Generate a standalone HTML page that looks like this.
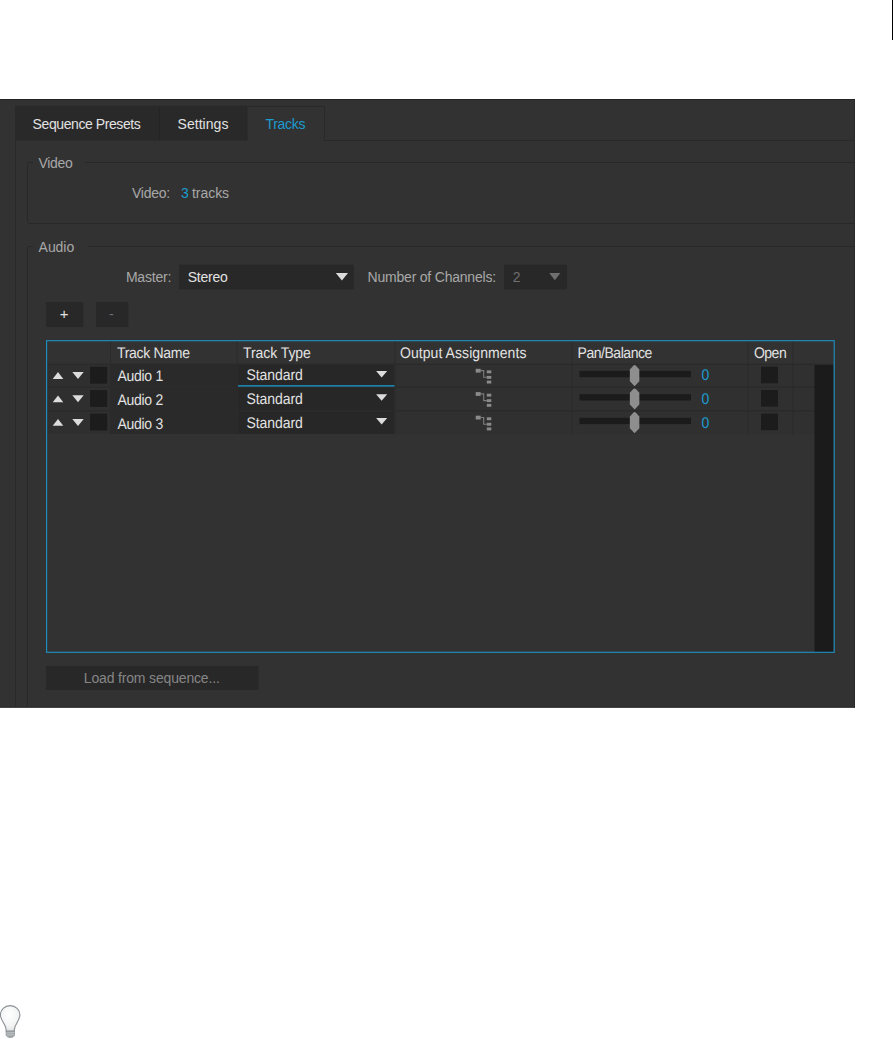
<!DOCTYPE html>
<html><head><meta charset="utf-8"><title>Tracks</title>
<style>
html,body{margin:0;padding:0;background:#fff}
body{width:893px;height:1039px;position:relative;overflow:hidden;font-family:"Liberation Sans",sans-serif}
svg{position:absolute;left:0;top:0;display:block}
span{position:absolute;display:block;white-space:pre}
.tt{text-rendering:geometricPrecision;transform-origin:0 12px;transform:scaleY(1.1)}
</style></head><body>
<svg width="893" height="1039" viewBox="0 0 893 1039">
<rect x="0" y="99" width="855" height="608.6" fill="#323232"/>
<rect x="0" y="99" width="855" height="1" fill="#232323"/>
<rect x="0" y="706.8" width="855" height="0.8" fill="#1f1f1f"/>
<rect x="854.2" y="99" width="0.8" height="608.6" fill="#2a2a2a"/>
<rect x="15" y="105.7" width="232" height="34.8" fill="#292929"/>
<rect x="159" y="106" width="1" height="34.5" fill="#242424"/>
<rect x="324" y="140" width="531" height="1" fill="#292929"/>
<rect x="246.5" y="106" width="78.5" height="1" fill="#292929"/>
<rect x="246.3" y="106" width="1.0" height="34.5" fill="#272727"/>
<rect x="324" y="106" width="1" height="35" fill="#292929"/>
<rect x="15" y="140.5" width="1" height="566.5" fill="#292929"/>
<path d="M855 162.5 H85 M33 162.5 H29.5 Q27.5 162.5 27.5 164.5 V221.5 Q27.5 223.5 29.5 223.5 H855" fill="none" stroke="#282828" stroke-width="1"/>
<path d="M855 246.5 H88.5 M33 246.5 H29.5 Q27.5 246.5 27.5 248.5 V707" fill="none" stroke="#282828" stroke-width="1"/>
<rect x="179" y="264.7" width="175" height="24.7" fill="#282828"/>
<path d="M335.8 272.9 L348 272.9 L341.9 280.5 Z" fill="#dcdcdc"/>
<rect x="504" y="264.7" width="63" height="24.7" fill="#282828"/>
<path d="M549.3 272.9 L560.4 272.9 L554.85 280.2 Z" fill="#707070"/>
<rect x="46" y="302" width="37.4" height="25" fill="#282828"/>
<rect x="96" y="302" width="32.4" height="25" fill="#282828"/>
<rect x="47" y="364.8" width="63" height="21.8" fill="#2f2f2f"/>
<rect x="111" y="364.8" width="126" height="21.8" fill="#2a2a2a"/>
<rect x="237.5" y="364.8" width="157.0" height="21.8" fill="#272727"/>
<rect x="395.5" y="364.8" width="419.5" height="21.8" fill="#303030"/>
<rect x="47" y="387.9" width="63" height="22.2" fill="#2f2f2f"/>
<rect x="111" y="387.9" width="126" height="22.2" fill="#2a2a2a"/>
<rect x="237.5" y="387.9" width="157.0" height="22.2" fill="#272727"/>
<rect x="395.5" y="387.9" width="419.5" height="22.2" fill="#303030"/>
<rect x="47" y="411.4" width="63" height="22.4" fill="#2f2f2f"/>
<rect x="111" y="411.4" width="126" height="22.4" fill="#2a2a2a"/>
<rect x="237.5" y="411.4" width="157.0" height="22.4" fill="#272727"/>
<rect x="395.5" y="411.4" width="419.5" height="22.4" fill="#303030"/>
<rect x="47" y="363.6" width="787" height="1.3" fill="#2b2b2b"/>
<rect x="47" y="386.6" width="768" height="1.4" fill="#2b2b2b"/>
<rect x="47" y="410.1" width="768" height="1.4" fill="#2b2b2b"/>
<rect x="110.0" y="341" width="1.0" height="93.5" fill="#2a2a2a"/>
<rect x="236.5" y="341" width="1.0" height="93.5" fill="#2a2a2a"/>
<rect x="394.5" y="341" width="1.0" height="93.5" fill="#2a2a2a"/>
<rect x="571.5" y="341" width="1.0" height="93.5" fill="#2a2a2a"/>
<rect x="747.5" y="341" width="1.0" height="93.5" fill="#2a2a2a"/>
<rect x="792.5" y="341" width="1.0" height="93.5" fill="#2a2a2a"/>
<rect x="814.5" y="365" width="19.0" height="287" fill="#1b1b1b"/>
<path d="M52.7 378.9 L63.3 378.9 L58.0 372.1 Z" fill="#dcdcdc"/>
<path d="M72.3 372.0 L83.7 372.0 L78.0 379.0 Z" fill="#dcdcdc"/>
<rect x="90" y="366.8" width="17.2" height="16.8" fill="#1c1c1c"/>
<path d="M376.1 371.0 L387.2 371.0 L381.65 377.5 Z" fill="#dcdcdc"/>
<rect x="475.7" y="368.8" width="5.0" height="3.8" fill="#8a8a8a"/>
<rect x="486.8" y="370.4" width="4.5" height="2.9" fill="#8a8a8a"/>
<rect x="486.8" y="375.9" width="4.5" height="2.9" fill="#8a8a8a"/>
<rect x="486.8" y="380.6" width="4.5" height="2.9" fill="#8a8a8a"/>
<path d="M480.7 370.6 H483.7 V377.3 H486.9" fill="none" stroke="#7c7c7c" stroke-width="1.1"/>
<rect x="579.5" y="370.9" width="111.5" height="6.3" fill="#1b1b1b"/>
<path d="M629.85 369.5 L633.3 365.8 Q634.6 364.4 635.9 365.8 L639.35 369.5 V381.3 L634.6 386.3 L629.85 381.3 Z" fill="#8e8e8e"/>
<rect x="761" y="366.7" width="17" height="16.6" fill="#1c1c1c"/>
<path d="M52.7 402.2 L63.3 402.2 L58.0 395.4 Z" fill="#dcdcdc"/>
<path d="M72.3 395.3 L83.7 395.3 L78.0 402.3 Z" fill="#dcdcdc"/>
<rect x="90" y="390.1" width="17.2" height="16.8" fill="#1c1c1c"/>
<path d="M376.1 394.3 L387.2 394.3 L381.65 400.8 Z" fill="#dcdcdc"/>
<rect x="475.7" y="392.1" width="5.0" height="3.8" fill="#8a8a8a"/>
<rect x="486.8" y="393.7" width="4.5" height="2.9" fill="#8a8a8a"/>
<rect x="486.8" y="399.2" width="4.5" height="2.9" fill="#8a8a8a"/>
<rect x="486.8" y="403.9" width="4.5" height="2.9" fill="#8a8a8a"/>
<path d="M480.7 393.9 H483.7 V400.6 H486.9" fill="none" stroke="#7c7c7c" stroke-width="1.1"/>
<rect x="579.5" y="394.2" width="111.5" height="6.3" fill="#1b1b1b"/>
<path d="M629.85 392.8 L633.3 389.1 Q634.6 387.7 635.9 389.1 L639.35 392.8 V404.6 L634.6 409.6 L629.85 404.6 Z" fill="#8e8e8e"/>
<rect x="761" y="390.0" width="17" height="16.6" fill="#1c1c1c"/>
<path d="M52.7 425.8 L63.3 425.8 L58.0 419.0 Z" fill="#dcdcdc"/>
<path d="M72.3 418.9 L83.7 418.9 L78.0 425.9 Z" fill="#dcdcdc"/>
<rect x="90" y="413.7" width="17.2" height="16.8" fill="#1c1c1c"/>
<path d="M376.1 417.9 L387.2 417.9 L381.65 424.4 Z" fill="#dcdcdc"/>
<rect x="475.7" y="415.7" width="5.0" height="3.8" fill="#8a8a8a"/>
<rect x="486.8" y="417.3" width="4.5" height="2.9" fill="#8a8a8a"/>
<rect x="486.8" y="422.8" width="4.5" height="2.9" fill="#8a8a8a"/>
<rect x="486.8" y="427.5" width="4.5" height="2.9" fill="#8a8a8a"/>
<path d="M480.7 417.5 H483.7 V424.2 H486.9" fill="none" stroke="#7c7c7c" stroke-width="1.1"/>
<rect x="579.5" y="417.8" width="111.5" height="6.3" fill="#1b1b1b"/>
<path d="M629.85 416.4 L633.3 412.7 Q634.6 411.3 635.9 412.7 L639.35 416.4 V428.2 L634.6 433.2 L629.85 428.2 Z" fill="#8e8e8e"/>
<rect x="761" y="413.6" width="17" height="16.6" fill="#1c1c1c"/>
<rect x="238" y="385.1" width="156.5" height="1.5" fill="#1f8cba"/>
<rect x="46.6" y="340.7" width="787.6" height="311.6" fill="none" stroke="#1d93c3" stroke-width="1.1"/>
<rect x="46" y="666" width="212.5" height="24" fill="#282828"/>
<rect x="892" y="0" width="1" height="40" fill="#000"/>
<defs><radialGradient id="g" cx="0.45" cy="0.35" r="0.7"><stop offset="0" stop-color="#ffffff"/><stop offset="0.6" stop-color="#f4f5f5"/><stop offset="1" stop-color="#dfe2e3"/></radialGradient></defs>
<g transform="translate(-1 1004)">
<path d="M11.1 1.6 C5.6 1.6 1.4 5.8 1.4 10.9 C1.4 15.6 5.4 19.2 6.6 23.2 C7 24.6 7.2 25.8 7.2 27.2 L15.2 27.2 C15.2 25.8 15.4 24.6 15.9 23.2 C17.2 19.2 20.9 15.6 20.9 10.9 C20.9 5.8 16.7 1.6 11.1 1.6 Z" fill="url(#g)" stroke="#8a9093" stroke-width="1.1"/>
<path d="M7.2 27 L15.4 27 L15.4 31.3 Q14.6 33.4 11.3 33.5 Q8 33.4 7.2 31.3 Z" fill="#a3a8aa" stroke="#8b9193" stroke-width="0.9"/>
<path d="M7.4 29.2 L15.2 28.4 M7.6 31.3 L15 30.5" stroke="#c4c8c9" stroke-width="0.8" fill="none"/>
</g>
</svg>
<span style="left:32.6px;top:117px;font-size:14px;line-height:14px;letter-spacing:-0.414px;color:#e2e2e2">Sequence Presets</span>
<span style="left:177.6px;top:117px;font-size:14px;line-height:14px;letter-spacing:0.031px;color:#e2e2e2">Settings</span>
<span style="left:265.4px;top:117px;font-size:14px;line-height:14px;letter-spacing:-0.296px;color:#1c9bcf">Tracks</span>
<span style="left:38.4px;top:156px;font-size:14px;line-height:14px;letter-spacing:-0.289px;color:#a8a8a8">Video</span>
<span style="left:131.9px;top:186px;font-size:14px;line-height:14px;letter-spacing:-0.229px;color:#a8a8a8">Video:</span>
<span style="left:180.9px;top:186px;font-size:14px;line-height:14px;letter-spacing:0px;color:#1c9bcf">3</span>
<span style="left:192.0px;top:186px;font-size:14px;line-height:14px;letter-spacing:-0.048px;color:#a8a8a8">tracks</span>
<span style="left:38.6px;top:240px;font-size:14px;line-height:14px;letter-spacing:-0.052px;color:#a8a8a8">Audio</span>
<span style="left:125.9px;top:270px;font-size:14px;line-height:14px;letter-spacing:-0.196px;color:#a8a8a8">Master:</span>
<span style="left:187.7px;top:270px;font-size:14px;line-height:14px;letter-spacing:-0.23px;color:#e2e2e2">Stereo</span>
<span style="left:367.6px;top:270px;font-size:14px;line-height:14px;letter-spacing:-0.211px;color:#a8a8a8">Number of Channels:</span>
<span style="left:512.7px;top:270px;font-size:14px;line-height:14px;letter-spacing:0px;color:#6f6f6f">2</span>
<span style="left:59.7px;top:306px;font-size:15px;line-height:15px;letter-spacing:0px;color:#e2e2e2">+</span>
<span style="left:109.0px;top:307px;font-size:14px;line-height:14px;letter-spacing:0px;color:#6f6f6f">-</span>
<span class="tt" style="left:117.0px;top:346px;font-size:14px;line-height:14px;letter-spacing:-0.302px;color:#e2e2e2">Track Name</span>
<span class="tt" style="left:243.1px;top:346px;font-size:14px;line-height:14px;letter-spacing:-0.085px;color:#e2e2e2">Track Type</span>
<span class="tt" style="left:400.0px;top:346px;font-size:14px;line-height:14px;letter-spacing:0.065px;color:#e2e2e2">Output Assignments</span>
<span class="tt" style="left:577.5px;top:346px;font-size:14px;line-height:14px;letter-spacing:-0.459px;color:#e2e2e2">Pan/Balance</span>
<span class="tt" style="left:753.9px;top:346px;font-size:14px;line-height:14px;letter-spacing:-0.483px;color:#e2e2e2">Open</span>
<span class="tt" style="left:117.5px;top:369px;font-size:14px;line-height:14px;letter-spacing:-0.297px;color:#e2e2e2">Audio 1</span>
<span class="tt" style="left:246.5px;top:368px;font-size:14px;line-height:14px;letter-spacing:-0.074px;color:#e2e2e2">Standard</span>
<span class="tt" style="left:701.4px;top:368px;font-size:14px;line-height:14px;letter-spacing:0px;color:#1c9bcf">0</span>
<span class="tt" style="left:117.5px;top:393px;font-size:14px;line-height:14px;letter-spacing:-0.297px;color:#e2e2e2">Audio 2</span>
<span class="tt" style="left:246.5px;top:392px;font-size:14px;line-height:14px;letter-spacing:-0.074px;color:#e2e2e2">Standard</span>
<span class="tt" style="left:701.4px;top:392px;font-size:14px;line-height:14px;letter-spacing:0px;color:#1c9bcf">0</span>
<span class="tt" style="left:117.5px;top:417px;font-size:14px;line-height:14px;letter-spacing:-0.297px;color:#e2e2e2">Audio 3</span>
<span class="tt" style="left:246.5px;top:416px;font-size:14px;line-height:14px;letter-spacing:-0.074px;color:#e2e2e2">Standard</span>
<span class="tt" style="left:701.4px;top:416px;font-size:14px;line-height:14px;letter-spacing:0px;color:#1c9bcf">0</span>
<span style="left:83.8px;top:671px;font-size:14px;line-height:14px;letter-spacing:-0.166px;color:#868686">Load from sequence...</span>
</body></html>
